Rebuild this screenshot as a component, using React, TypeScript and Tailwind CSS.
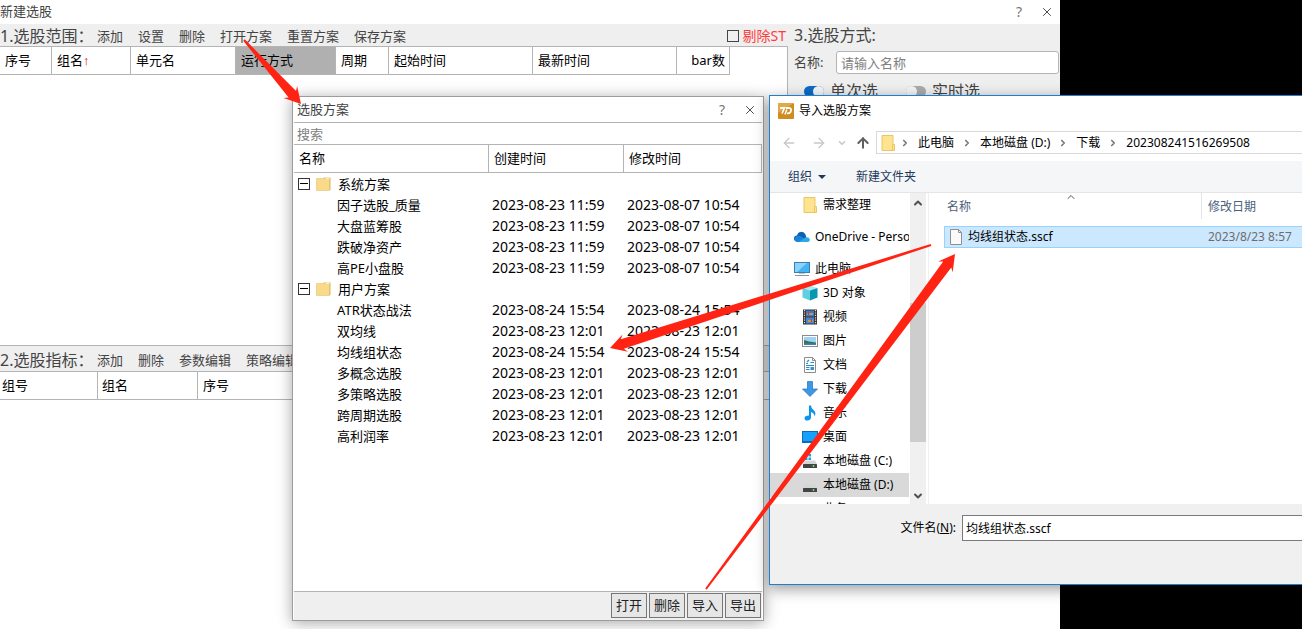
import React from 'react';
import { ArrowLeft, ArrowRight, ArrowUp, ChevronDown, ChevronRight, ChevronUp, X } from 'lucide-react';

interface Scheme {
  name: string;
  created: string;
  modified: string;
}

interface SchemeGroup {
  title: string;
  items: Scheme[];
}

const groups: SchemeGroup[] = [
  {
    title: '系统方案',
    items: [
      { name: '因子选股_质量', created: '2023-08-23 11:59', modified: '2023-08-07 10:54' },
      { name: '大盘蓝筹股', created: '2023-08-23 11:59', modified: '2023-08-07 10:54' },
      { name: '跌破净资产', created: '2023-08-23 11:59', modified: '2023-08-07 10:54' },
      { name: '高PE小盘股', created: '2023-08-23 11:59', modified: '2023-08-07 10:54' },
    ],
  },
  {
    title: '用户方案',
    items: [
      { name: 'ATR状态战法', created: '2023-08-24 15:54', modified: '2023-08-24 15:54' },
      { name: '双均线', created: '2023-08-23 12:01', modified: '2023-08-23 12:01' },
      { name: '均线组状态', created: '2023-08-24 15:54', modified: '2023-08-24 15:54' },
      { name: '多概念选股', created: '2023-08-23 12:01', modified: '2023-08-23 12:01' },
      { name: '多策略选股', created: '2023-08-23 12:01', modified: '2023-08-23 12:01' },
      { name: '跨周期选股', created: '2023-08-23 12:01', modified: '2023-08-23 12:01' },
      { name: '高利润率', created: '2023-08-23 12:01', modified: '2023-08-23 12:01' },
    ],
  },
];

function WindowButtons() {
  return (
    <div className="flex items-center gap-4 text-[#333]">
      <button aria-label="帮助" className="w-2.5 text-sm leading-none text-[#777]">?</button>
      <button aria-label="关闭"><X size={14} strokeWidth={1.5} /></button>
    </div>
  );
}

function Toolbar({ title, actions, children }: { title: string; actions: string[]; children?: React.ReactNode }) {
  return (
    <div className="flex h-full items-center bg-[#efefef] pt-0.5 text-[#444]">
      <h2 className="w-[97px] shrink-0 text-base leading-5 whitespace-nowrap">{title}</h2>
      <div className="flex gap-[15px] text-[13px] leading-5 whitespace-nowrap">
        {actions.map(action => (
          <button key={action}>{action}</button>
        ))}
      </div>
      {children}
    </div>
  );
}

/* Icons */

function Folder({ className = '' }: { className?: string }) {
  return (
    <svg viewBox="0 0 16 14" className={className}>
      <path d="M7 2l1-1.500h6.500v12.500H9z" fill="#d9b45c" />
      <path d="M0.500 1.500h13v12h-13z" fill="#f8da88" stroke="#e3c373" strokeWidth="0.600" />
      <path d="M9.500 1.200h4" stroke="#fff" />
    </svg>
  );
}

function TallFolder() {
  return (
    <svg viewBox="0 0 16 16" className="size-4 shrink-0">
      <path d="M2 0.500h11v9h1.500v6H2z" fill="#ffe48f" stroke="#e6c25a" strokeWidth="0.9" />
      <path d="M12.500 9.500v6" stroke="#e6c25a" strokeWidth="0.9" />
    </svg>
  );
}

function AppLogo() {
  return (
    <svg viewBox="0 0 16 16" className="size-4">
      <rect width="16" height="16" rx="1" fill="#cf8c1f" />
      <path d="M0 0h16L0 10z" fill="#e0aa4a" />
      <path d="M2 5h4.500L4 10.500M8 5h3q2.500 0 2 2.700t-3 2.700H9" fill="none" stroke="#fff" strokeWidth="1.800" />
      <path d="M8.800 6.500L7 11.500" stroke="#fff" strokeWidth="1.500" />
    </svg>
  );
}

function OneDriveIcon() {
  return (
    <svg viewBox="0 0 16 16" className="size-4 shrink-0">
      <path d="M3 12.500a3 3 0 0 1 0-6 4.500 4.500 0 0 1 8.500-1l2 7z" fill="#0f5fb3" />
      <path d="M3 13a3 3 0 0 1-1-5.500q3-1.500 6 .5l5 5z" fill="#1784d8" />
      <path d="M5 13l6-4.500q4-1 4.800 2 .2 2.500-2.500 2.500z" fill="#29a8ea" />
    </svg>
  );
}

function ComputerIcon() {
  return (
    <svg viewBox="0 0 16 16" className="size-4 shrink-0">
      <rect x="0.500" y="1.500" width="15" height="10" fill="#45b3f5" stroke="#3a7fae" />
      <path d="M1 2h12L3 11H1z" fill="#8ad3fb" />
      <path d="M1 14.500h14" stroke="#8795a0" />
      <path d="M5 12.500h6" stroke="#c0cad0" />
    </svg>
  );
}

function CubeIcon() {
  return (
    <svg viewBox="0 0 16 16" className="size-4 shrink-0">
      <path d="M8 0.500l7.500 2.500L8 5.500 0.500 3z" fill="#a5ecf5" />
      <path d="M0.500 3L8 5.500v10l-7.500-3z" fill="#5fd0e0" />
      <path d="M15.500 3L8 5.500v10l7.500-3z" fill="#0a98b0" />
    </svg>
  );
}

function VideoIcon() {
  return (
    <svg viewBox="0 0 16 16" className="size-4 shrink-0">
      <rect x="1" y="0.500" width="14" height="15" fill="#333" />
      <path d="M2.500 1v14M13.500 1v14" stroke="#ddd" strokeWidth="1.200" strokeDasharray="1.200 1.200" />
      <rect x="4" y="1.500" width="8" height="6" fill="#3c7ac6" />
      <rect x="4" y="8.500" width="8" height="6" fill="#4a86d8" />
      <path d="M5 5h6M6 12h5" stroke="#e0a828" strokeWidth="1.500" />
      <path d="M6.500 3v3M9.500 10v3" stroke="#c8402c" strokeWidth="1.300" />
    </svg>
  );
}

function PictureIcon() {
  return (
    <svg viewBox="0 0 16 16" className="size-4 shrink-0">
      <rect x="0.500" y="2.500" width="15" height="11" fill="#fff" stroke="#8c8c8c" />
      <rect x="2" y="4" width="12" height="8" fill="#9fd3f5" />
      <path d="M2 7l5 1.500 7 1V12H2z" fill="#3c7055" />
      <path d="M2 10.500h12V12H2z" fill="#3484bd" />
    </svg>
  );
}

function DocumentIcon() {
  return (
    <svg viewBox="0 0 16 16" className="size-4 shrink-0">
      <path d="M2.500 0.500h8l3 3v12h-11z" fill="#fff" stroke="#8c8c8c" />
      <path d="M10.500 0.500v3h3" fill="none" stroke="#8c8c8c" />
      <path d="M4 6.500h2M4 8.500h8M4 10.500h3.500M4 12.500h3.500M8.500 5.500H12" stroke="#258cd2" />
      <path d="M5 5l2-2" stroke="#258cd2" strokeWidth="1.300" />
      <path d="M8.500 10h3.500v3H8.500z" fill="#368fc6" />
    </svg>
  );
}

function DownloadIcon() {
  return (
    <svg viewBox="0 0 16 16" className="size-4 shrink-0">
      <path d="M5.500 0.500h5v7.500h5L8 15.500 0.500 8h5z" fill="#3e97e6" stroke="#2272b8" strokeWidth="0.700" />
    </svg>
  );
}

function MusicIcon() {
  return (
    <svg viewBox="0 0 16 16" className="size-4 shrink-0">
      <path d="M7 0.500h2q0 3 3 5 2.500 2.500.5 6 0-3.500-3.500-4.500v5.500q-.5 3-3.500 3-3 0-3-2.300 0-2.700 4.500-2.700z" fill="#0c95ee" />
    </svg>
  );
}

function DesktopIcon() {
  return (
    <svg viewBox="0 0 16 16" className="size-4 shrink-0">
      <rect x="0.500" y="2.500" width="15" height="11" fill="#15a0fb" stroke="#0a6cb8" />
      <path d="M1 12.500h14" stroke="#0a6cb8" />
    </svg>
  );
}

function DriveIcon({ system = false }: { system?: boolean }) {
  return (
    <svg viewBox="0 0 16 16" className="size-4 shrink-0">
      {system && <path d="M3 1h2.500v2.500H3zM6.500 1H9v2.500H6.500zM3 4.500h2.500V7H3zM6.500 4.500H9V7H6.500z" fill="#12a5ee" />}
      <path d="M3 7.500h10l2 3.500H1z" fill="#d5d5d8" />
      <rect x="1" y="11" width="14" height="4" rx="0.500" fill="#444" />
      <circle cx="11.500" cy="13" r="0.900" fill="#6ef06e" />
    </svg>
  );
}

function FileIcon() {
  return (
    <svg viewBox="0 0 16 16" className="size-4 shrink-0">
      <path d="M2.500 0.500h8l3 3v12h-11z" fill="#fafafa" stroke="#8f8f8f" />
      <path d="M10.500 0.500v3h3" fill="none" stroke="#8f8f8f" />
    </svg>
  );
}

const driveItems = [
  { label: '3D 对象', icon: <CubeIcon /> },
  { label: '视频', icon: <VideoIcon /> },
  { label: '图片', icon: <PictureIcon /> },
  { label: '文档', icon: <DocumentIcon /> },
  { label: '下载', icon: <DownloadIcon /> },
  { label: '音乐', icon: <MusicIcon /> },
  { label: '桌面', icon: <DesktopIcon /> },
  { label: '本地磁盘 (C:)', icon: <DriveIcon system /> },
  { label: '本地磁盘 (D:)', icon: <DriveIcon />, selected: true },
  { label: '业务', icon: <DriveIcon /> },
];

function MainWindow() {
  return (
    <main className="flex min-w-0 flex-1 flex-col bg-white">
      <header className="flex h-6 shrink-0 items-center justify-between pr-1.5">
        <h1 className="text-[13px] text-[#444]">新建选股</h1>
        <WindowButtons />
      </header>

      <div className="flex flex-1 items-start">
        <div className="min-w-0 flex-1">
          {/* Scope */}
          <section className="h-[321px]">
            <div className="h-[22px]">
              <Toolbar title="1.选股范围：" actions={['添加', '设置', '删除', '打开方案', '重置方案', '保存方案']}>
                <label className="ml-auto flex items-center gap-1 pr-px text-sm leading-5 text-[#ff3b3b]">
                  <input type="checkbox" className="size-3 appearance-none border border-[#444]" />
                  剔除ST
                </label>
              </Toolbar>
            </div>
            <div className="border-t border-[#b4b4b4]">
              <table className="table-fixed border-separate border-spacing-0 text-[13px]">
                <thead>
                  <tr className="h-7 text-left *:border-r *:border-b *:border-[#b4b4b4] *:p-0 *:pl-[5px] *:font-normal">
                    <th className="w-[52px]">序号</th>
                    <th className="w-[79px]">组名<span className="font-['Liberation_Sans'] text-red-600">↑</span></th>
                    <th className="w-[105px]">单元名</th>
                    <th className="w-[100px] bg-[#b0b0b0]">运行方式</th>
                    <th className="w-[53px]">周期</th>
                    <th className="w-[144px]">起始时间</th>
                    <th className="w-[144px]">最新时间</th>
                    <th className="w-[53px]"><div className="pr-1 text-right">bar数</div></th>
                  </tr>
                </thead>
              </table>
            </div>
          </section>

          {/* Indicators */}
          <section>
            <div className="h-[26px] border-t border-[#b4b4b4]">
              <Toolbar title="2.选股指标：" actions={['添加', '删除', '参数编辑', '策略编辑']} />
            </div>
            <table className="w-full table-fixed border-separate border-spacing-0 border-t border-[#b4b4b4] text-[13px]">
              <thead>
                <tr className="h-7 text-left *:border-r *:border-b *:border-[#b4b4b4] *:p-0 *:font-normal">
                  <th className="w-[98px]"><div className="pl-0.5">组号</div></th>
                  <th className="w-[100px]"><div className="pl-1">组名</div></th>
                  <th><div className="pl-[5px]">序号</div></th>
                </tr>
              </thead>
            </table>
          </section>
        </div>

        {/* Mode */}
        <aside className="h-[500px] w-[273px] bg-[#efefef] text-[#444]">
          <h2 className="h-[22px] pl-[7px] text-base leading-[22px]">3.选股方式:</h2>
          <div className="h-full border-l border-[#b4b4b4] pt-[5px] pr-px pl-1.5">
            <div className="flex h-[23px] items-center text-[13px]">
              <label htmlFor="scheme-name" className="w-[42px]">名称:</label>
              <input
                id="scheme-name"
                placeholder="请输入名称"
                className="h-full min-w-0 flex-1 rounded-[3px] border border-[#b4b4b4] bg-white px-1 placeholder:text-[#808080]"
              />
            </div>
            <div className="flex gap-7 pt-[7px] pl-2.5 text-base leading-5">
              <label className="flex items-center gap-1.5">
                <input type="checkbox" defaultChecked className="relative h-[11px] w-5 appearance-none rounded-full bg-[#0b6cc4] before:absolute before:right-0 before:size-[11px] before:rounded-full before:bg-[#f4f4f4]" />
                单次选
              </label>
              <label className="flex items-center gap-1.5">
                <input type="checkbox" className="relative h-[11px] w-5 appearance-none rounded-full bg-[#aaa] before:absolute before:left-0 before:size-[11px] before:rounded-full before:bg-[#f4f4f4]" />
                实时选
              </label>
            </div>
          </div>
        </aside>
      </div>
    </main>
  );
}

function SchemeDialog() {
  return (
    <section className="absolute top-24 left-[292px] flex h-[525px] w-[472px] flex-col border border-[#9c9c9c] bg-white px-px shadow-[0_2px_14px_rgba(0,0,0,0.35)]">
      <header className="flex h-[25px] items-center justify-between pt-px pr-[5px] pl-[3px] text-[13px] text-[#444]">
        <h2>选股方案</h2>
        <WindowButtons />
      </header>
      <input
        aria-label="搜索"
        placeholder="搜索"
        className="h-[23px] w-full shrink-0 border-y border-[#b4b4b4] px-[3px] text-[13px] placeholder:text-[#808080]"
      />
      <table className="w-full table-fixed border-separate border-spacing-0 text-[13px]">
        <thead>
          <tr className="h-7 text-left *:border-r *:border-b *:border-[#b4b4b4] *:p-0 *:pl-[5px] *:font-normal">
            <th className="w-[195px]">名称</th>
            <th className="w-[135px]">创建时间</th>
            <th>修改时间</th>
          </tr>
        </thead>
        <tbody className="leading-5">
          {groups.map(group => (
            <React.Fragment key={group.title}>
              <tr className="h-[21px]">
                <td colSpan={3} className="p-0">
                  <div className="flex items-center pl-1">
                    <button aria-label="折叠" className="flex size-3 items-center justify-center border border-[#333]">
                      <span className="h-px w-2 bg-black" />
                    </button>
                    <Folder className="mx-1.5 h-3.5 w-4" />
                    {group.title}
                  </div>
                </td>
              </tr>
              {group.items.map(item => (
                <tr key={item.name} className="h-[21px] *:p-0">
                  <td><div className="pl-[43px]">{item.name}</div></td>
                  <td className="text-sm leading-5"><div className="pl-[3px]">{item.created}</div></td>
                  <td className="text-sm leading-5"><div className="pl-[3px]">{item.modified}</div></td>
                </tr>
              ))}
            </React.Fragment>
          ))}
        </tbody>
      </table>
      <footer className="mt-auto flex h-[29px] shrink-0 items-start justify-end gap-0.5 border-t border-[#b4b4b4] bg-[#efefef] pt-px pr-px text-[13px] text-[#222]">
        {['打开', '删除', '导入', '导出'].map(label => (
          <button key={label} className="h-[25px] w-9 border border-[#777] bg-[#e6e6e6]">{label}</button>
        ))}
      </footer>
    </section>
  );
}

function ImportDialog() {
  return (
    <section className="absolute top-[95px] right-0 left-[769px] flex h-[490px] flex-col border border-r-0 border-[#1c7fd2] bg-white text-xs shadow-[0_4px_14px_rgba(0,0,0,0.4)]">
      <header className="flex h-[30px] items-center gap-[5px] pl-2">
        <AppLogo />
        <h2>导入选股方案</h2>
      </header>

      {/* Address bar */}
      <div className="flex h-[35px] items-start pt-[5px]">
        <nav className="flex h-[23px] w-[106px] shrink-0 items-center pl-[11px] text-[#c9c9c9]">
          <button aria-label="后退"><ArrowLeft size={16} strokeWidth={2} /></button>
          <button aria-label="前进" className="ml-3.5"><ArrowRight size={16} strokeWidth={2} /></button>
          <button aria-label="最近" className="ml-2.5"><ChevronDown size={10} strokeWidth={4} /></button>
          <button aria-label="上移" className="ml-2 text-[#606060]"><ArrowUp size={16} strokeWidth={3} /></button>
        </nav>
        <div className="flex h-[23px] flex-1 items-center gap-2 border border-r-0 border-[#d9d9d9] pl-[3px] whitespace-nowrap">
          <TallFolder />
          <ChevronRight size={10} strokeWidth={4} className="-ml-1 text-[#777]" />
          <a href="#pc">此电脑</a>
          <ChevronRight size={10} strokeWidth={4} className="text-[#777]" />
          <a href="#d">本地磁盘 (D:)</a>
          <ChevronRight size={10} strokeWidth={4} className="text-[#777]" />
          <a href="#downloads">下载</a>
          <ChevronRight size={10} strokeWidth={4} className="text-[#777]" />
          <a href="#folder">202308241516269508</a>
        </div>
      </div>

      <div className="flex h-8 shrink-0 items-center border-b border-[#e5e5e5] bg-[#f5f6f8] pl-[18px] text-[#1e395b]">
        <button className="flex items-center gap-1.5">
          组织
          <svg viewBox="0 0 8 4" className="h-1 w-2"><path d="M0 0h8L4 4z" fill="#1e395b" /></svg>
        </button>
        <button className="ml-[30px]">新建文件夹</button>
      </div>

      <div className="flex h-[311px] shrink-0">
        {/* Folder tree */}
        <nav className="w-[140px] overflow-hidden pr-px whitespace-nowrap">
          <a href="#req" className="flex h-6 items-center gap-[5px] pl-8"><TallFolder />需求整理</a>
          <a href="#onedrive" className="mt-2 flex h-6 items-center gap-[5px] overflow-hidden pl-6"><OneDriveIcon />OneDrive - Personal</a>
          <a href="#pc" className="mt-2 flex h-6 items-center gap-[5px] pl-6"><ComputerIcon />此电脑</a>
          {driveItems.map(item => (
            <a
              key={item.label}
              href="#item"
              className={`flex h-6 items-center gap-[5px] pl-8 ${item.selected ? 'bg-[#d9d9d9]' : ''}`}
            >
              {item.icon}
              {item.label}
            </a>
          ))}
        </nav>
        <div className="flex w-4 flex-col items-center bg-[#f0f0f0] text-[#505050]">
          <ChevronUp size={12} strokeWidth={4} className="mt-1" />
          <div className="mt-[94px] h-[139px] w-full bg-[#cdcdcd]" />
          <ChevronDown size={12} strokeWidth={4} className="mt-auto mb-0.5" />
        </div>

        {/* File list */}
        <div className="ml-0.5 flex-1 border-l border-[#f0f0f0] pl-[15px]">
          <table className="w-full table-fixed border-separate border-spacing-0">
            <thead>
              <tr className="h-[26px] text-left text-[#4c607a] *:p-0 *:font-normal">
                <th className="w-[258px] border-r border-[#e5e5e5]">
                  <div className="relative pt-0.5 pl-[3px]">
                    名称
                    <ChevronUp size={12} strokeWidth={2} className="absolute -top-1.5 left-[121px] text-[#555]" />
                  </div>
                </th>
                <th><div className="pt-0.5 pl-1.5">修改日期</div></th>
              </tr>
            </thead>
            <tbody>
              <tr className="h-[7px]"><td /></tr>
              <tr className="h-[22px] *:border-y *:border-[#99d1ff] *:bg-[#cce8ff] *:p-0">
                <td className="border-l">
                  <div className="flex items-center gap-1 pl-[3px]"><FileIcon />均线组状态.sscf</div>
                </td>
                <td className="whitespace-nowrap text-[#6d6d6d]"><div className="pl-1.5">2023/8/23 8:57</div></td>
              </tr>
            </tbody>
          </table>
        </div>
      </div>

      <footer className="flex flex-1 items-start bg-[#f0f0f0] pt-[11px]">
        <label htmlFor="file-name" className="w-48 shrink-0 pr-1.5 text-right leading-[26px]">文件名(<u>N</u>):</label>
        <input
          id="file-name"
          defaultValue="均线组状态.sscf"
          className="h-[26px] min-w-0 flex-1 border border-r-0 border-[#7a7a7a] bg-white px-[3px]"
        />
      </footer>
    </section>
  );
}

interface Pointer {
  tail: [number, number];
  tip: [number, number];
}

const pointers: Pointer[] = [
  { tail: [244, 40], tip: [301, 104] },
  { tail: [931, 245], tip: [610, 348] },
  { tail: [706, 589], tip: [955, 254] },
];

// Tapered arrow outline running from a thin tail to a barbed head
function arrowPoints({ tail, tip }: Pointer) {
  const dx = tip[0] - tail[0];
  const dy = tip[1] - tail[1];
  const len = Math.hypot(dx, dy);
  const at = (back: number, side: number) =>
    `${tip[0] - (dx * back + dy * side) / len},${tip[1] - (dy * back - dx * side) / len}`;
  return [at(len, 1), at(13, 5), at(16, 9), at(0, 0), at(16, -9), at(13, -5), at(len, -1)].join(' ');
}

export default function App() {
  return (
    <div className="relative flex min-h-screen overflow-hidden bg-black font-['Noto_Sans','Noto_Sans_CJK_SC',sans-serif] text-black">
      <MainWindow />
      <div className="w-[242px] shrink-0" />
      <SchemeDialog />
      <ImportDialog />
      <svg className="pointer-events-none absolute inset-0 size-full" fill="#ff2313">
        {pointers.map(pointer => (
          <polygon key={pointer.tip.join()} points={arrowPoints(pointer)} />
        ))}
      </svg>
    </div>
  );
}
